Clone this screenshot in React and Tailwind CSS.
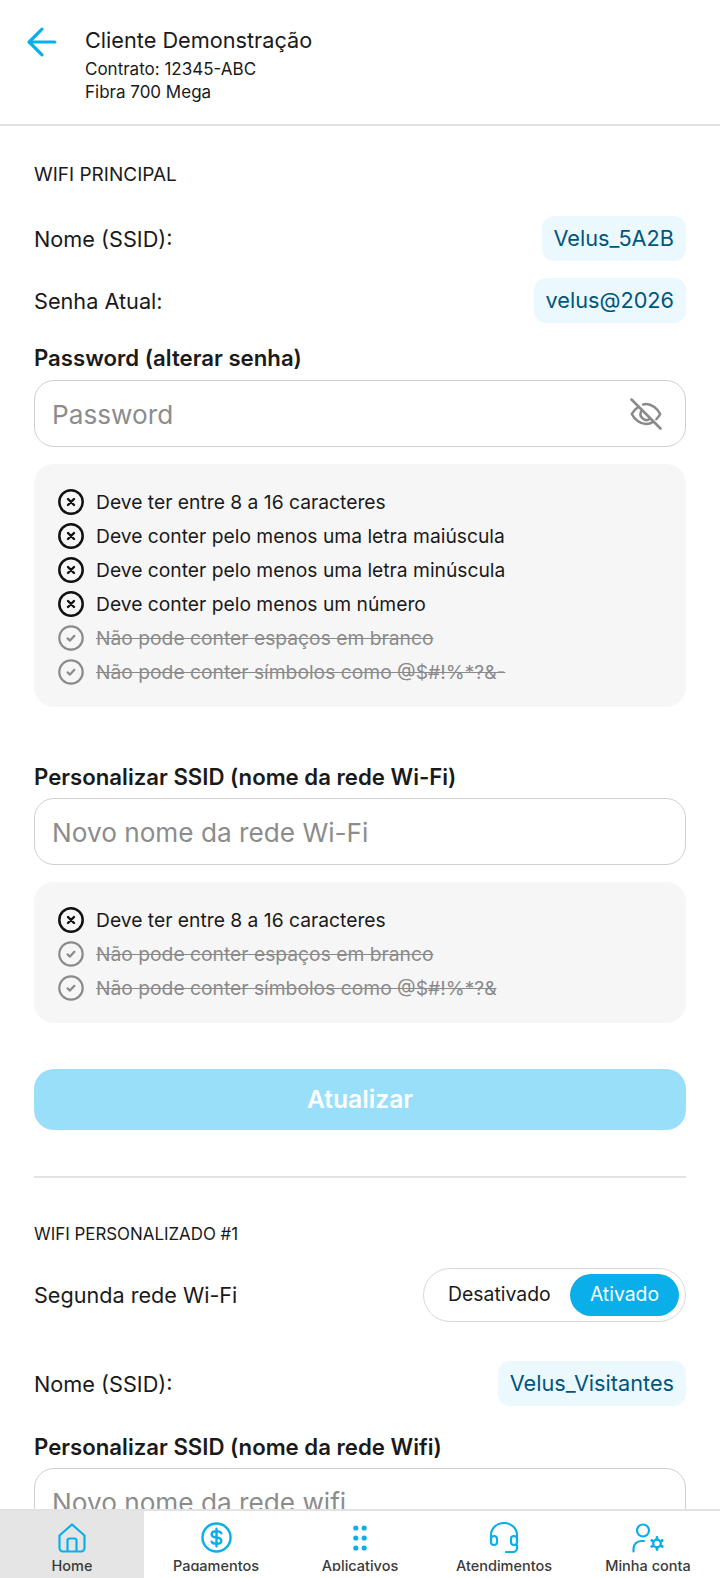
import { ArrowLeft } from 'lucide-react';

function CrossIcon() {
  return (
    <svg width="26" height="26" viewBox="0 0 26 26" fill="none" stroke="#111111" strokeLinecap="round" className="shrink-0">
      <circle cx="13" cy="13" r="11.7" strokeWidth="2.5" />
      <path d="M10 10l6 6M16 10l-6 6" strokeWidth="2.4" />
    </svg>
  );
}

function CheckIcon() {
  return (
    <svg width="26" height="26" viewBox="0 0 26 26" fill="none" stroke="#8a8a8a" strokeLinecap="round" strokeLinejoin="round" className="shrink-0">
      <circle cx="13" cy="13" r="11.7" strokeWidth="2.2" />
      <path d="M9.600 13.400l2.400 2.200 4.400-4.800" strokeWidth="2.200" />
    </svg>
  );
}

function Rule({ text, done }) {
  return (
    <div className="flex h-[34px] items-center gap-3">
      {done ? <CheckIcon /> : <CrossIcon />}
      <span className={done ? 'text-[#8a8a8a] line-through' : 'text-[#1a1a1a]'}>{text}</span>
    </div>
  );
}

function RuleBox({ rules }) {
  return (
    <div className="mt-[17px] rounded-[20px] bg-[#f6f6f6] pl-6 pt-[21px] pb-[18px] text-[19.25px]">
      {rules.map((rule) => (
        <Rule key={rule.text} text={rule.text} done={rule.done} />
      ))}
    </div>
  );
}

function InfoRow({ label, value, className }) {
  return (
    <div className={`flex items-center justify-between ${className}`}>
      <span className="pt-[2px] text-[21.7px] text-[#1a1a1a]">{label}</span>
      <span className="flex h-[45px] items-center rounded-xl bg-[#ebf8fe] px-3 text-[21.7px] text-[#00567a]">{value}</span>
    </div>
  );
}

function TextBox({ placeholder, children, className = '' }) {
  return (
    <div className={`flex h-[67px] items-center justify-between rounded-[20px] border-[1.5px] border-[#d0d0d0] bg-white pl-[17px] pr-[22px] text-[26.2px] text-[#8c8c8c] ${className}`}>
      <span className="pt-[3px]">{placeholder}</span>
      {children}
    </div>
  );
}

function EyeOff() {
  return (
    <svg width="34" height="34" viewBox="0 0 34 34" fill="none" stroke="#8a8a8a" strokeWidth="2.6" strokeLinecap="round" strokeLinejoin="round">
      <path d="M9.500 9.800C6.600 11.800 4 14.600 2.800 17c2.600 5.200 8.400 10 14.200 10 2.600 0 5.200-.9 7.500-2.400" />
      <path d="M14.200 7.400c.9-.2 1.900-.4 2.800-.4 5.800 0 11.600 4.800 14.200 10-.9 1.800-2.200 3.600-3.800 5.100" />
      <path d="M12.600 13.600a6 6 0 0 0 8.200 8.400" />
      <path d="M2.500 2.500l29 29" />
    </svg>
  );
}

function NavItem({ label, active, children }) {
  return (
    <div className={`flex w-[144px] flex-col items-center pt-[11px] ${active ? 'bg-[#e5e5e5]' : ''}`}>
      <div className="flex h-[31px] items-center justify-center">{children}</div>
      <div className="mt-[2px] h-4 overflow-hidden text-[14.5px] leading-[22px] font-medium text-[#3a3a3a]">{label}</div>
    </div>
  );
}

const passwordRules = [
  { text: 'Deve ter entre 8 a 16 caracteres' },
  { text: 'Deve conter pelo menos uma letra maiúscula' },
  { text: 'Deve conter pelo menos uma letra minúscula' },
  { text: 'Deve conter pelo menos um número' },
  { text: 'Não pode conter espaços em branco', done: true },
  { text: 'Não pode conter símbolos como @$#!%*?&-', done: true },
];

const ssidRules = [
  { text: 'Deve ter entre 8 a 16 caracteres' },
  { text: 'Não pode conter espaços em branco', done: true },
  { text: 'Não pode conter símbolos como @$#!%*?&', done: true },
];

export default function App() {
  return (
    <div className="relative h-[1578px] w-[720px] overflow-hidden bg-white font-['Inter',sans-serif]">
      <header className="flex h-[126px] gap-[21px] border-b-2 border-[#e2e2e2] pl-[20px] pt-[25px]">
        <ArrowLeft size={44} color="#0aaee9" strokeWidth={1.75} className="-mt-[5px]" />
        <div className="text-[#1a1a1a]">
          <div className="text-[21.7px] leading-[30px]">Cliente Demonstração</div>
          <div className="mt-[3px] text-[17px] leading-[23px]">Contrato: 12345-ABC</div>
          <div className="text-[17px] leading-[23px]">Fibra 700 Mega</div>
        </div>
      </header>

      <main className="px-[34px]">
        <h2 className="mt-[37px] text-[19px] leading-6 text-[#1a1a1a]">WIFI PRINCIPAL</h2>
        <InfoRow label="Nome (SSID):" value="Velus_5A2B" className="mt-[29px]" />
        <InfoRow label="Senha Atual:" value="velus@2026" className="mt-[17px]" />

        <label className="mt-[21px] block text-[22.2px] leading-7 font-semibold text-[#1a1a1a]">Password (alterar senha)</label>
        <TextBox placeholder="Password" className="mt-[8px]">
          <EyeOff />
        </TextBox>
        <RuleBox rules={passwordRules} />

        <label className="mt-[56px] block text-[22.2px] leading-7 font-semibold text-[#1a1a1a]">Personalizar SSID (nome da rede Wi-Fi)</label>
        <TextBox placeholder="Novo nome da rede Wi-Fi" className="mt-[7px]" />
        <RuleBox rules={ssidRules} />

        <button className="mt-[46px] block h-[61px] w-full rounded-[20px] bg-[#99dff9] text-[24.7px] font-semibold text-white">Atualizar</button>
        <div className="mt-[46px] h-[2px] bg-[#e2e2e2]" />

        <h2 className="mt-[45px] text-[16.9px] leading-[22px] text-[#1a1a1a]">WIFI PERSONALIZADO #1</h2>
        <div className="mt-[23px] flex items-center justify-between">
          <span className="text-[21.6px] text-[#1a1a1a]">Segunda rede Wi-Fi</span>
          <div className="flex h-[54px] w-[263px] items-center justify-between rounded-full border-[1.5px] border-[#d8d8d8] pl-[24px] pr-[6px] text-[19.4px]">
            <span className="text-[#1a1a1a]">Desativado</span>
            <span className="flex h-[42px] w-[109px] items-center justify-center rounded-full bg-[#0aaee9] text-white">Ativado</span>
          </div>
        </div>
        <InfoRow label="Nome (SSID):" value="Velus_Visitantes" className="mt-[39px]" />
        <label className="mt-[27px] block text-[22.2px] leading-7 font-semibold text-[#1a1a1a]">Personalizar SSID (nome da rede Wifi)</label>
        <TextBox placeholder="Novo nome da rede wifi" className="mt-[7px]" />
      </main>

      <nav className="absolute right-0 bottom-0 left-0 flex h-[69px] border-t-2 border-[#e2e2e2] bg-white">
        <NavItem label="Home" active>
          <svg width="28" height="30" viewBox="0 0 28 30" fill="none" stroke="#0aaee9" strokeWidth="2.2" strokeLinejoin="round">
            <path d="M14 1.500L1.500 12.500V25a3.500 3.500 0 0 0 3.500 3.500h18a3.500 3.500 0 0 0 3.500-3.500V12.500L14 1.500z" />
            <path d="M9.500 28.500V17.500a2 2 0 0 1 2-2h5a2 2 0 0 1 2 2v11" />
          </svg>
        </NavItem>
        <NavItem label="Pagamentos">
          <svg width="31" height="31" viewBox="0 0 32 32" fill="none" stroke="#0aaee9" strokeWidth="2.500" strokeLinecap="round" strokeLinejoin="round">
            <circle cx="16" cy="16" r="14.500" />
            <path d="M16 7v18M21 11.500c-.8-1.300-2.600-2-5-2-3 0-5 1.300-5 3.300s2 2.800 5 3.200 5 1.300 5 3.300-2 3.200-5 3.200c-2.400 0-4.200-.7-5-2" />
          </svg>
        </NavItem>
        <NavItem label="Aplicativos">
          <svg width="14" height="26" viewBox="0 0 14 26" fill="#0aaee9">
            <circle cx="2.800" cy="3" r="2.600" />
            <circle cx="11.200" cy="3" r="2.600" />
            <circle cx="2.800" cy="13" r="2.600" />
            <circle cx="11.200" cy="13" r="2.600" />
            <circle cx="2.800" cy="23" r="2.600" />
            <circle cx="11.200" cy="23" r="2.600" />
          </svg>
        </NavItem>
        <NavItem label="Atendimentos">
          <svg width="30" height="31" viewBox="0 0 30 31" fill="none" stroke="#0aaee9" strokeWidth="2.200" strokeLinecap="round" strokeLinejoin="round">
            <path d="M2 19V13a13 12 0 0 1 26 0v6" />
            <rect x="2" y="14" width="6" height="9" rx="3" />
            <rect x="22" y="14" width="6" height="9" rx="3" />
            <path d="M28 23v3a4 4 0 0 1-4 4h-7" />
          </svg>
        </NavItem>
        <NavItem label="Minha conta">
          <svg width="32" height="30" viewBox="0 0 32 30" fill="none" stroke="#0aaee9" strokeLinecap="round" strokeLinejoin="round">
            <circle cx="11" cy="7.500" r="6" strokeWidth="2.200" />
            <path d="M1.500 28.500v-3a7.500 7.500 0 0 1 7.500-7.500h3" strokeWidth="2.200" />
            <circle cx="25" cy="20.500" r="3.800" strokeWidth="2.200" />
            <path d="M25 14.500v1.800M25 24.700v1.800M19.800 17.500l1.600.9M28.600 22.600l1.600.9M19.800 23.500l1.600-.9M28.600 18.400l1.600-.9" strokeWidth="2.800" />
          </svg>
        </NavItem>
      </nav>
    </div>
  );
}
